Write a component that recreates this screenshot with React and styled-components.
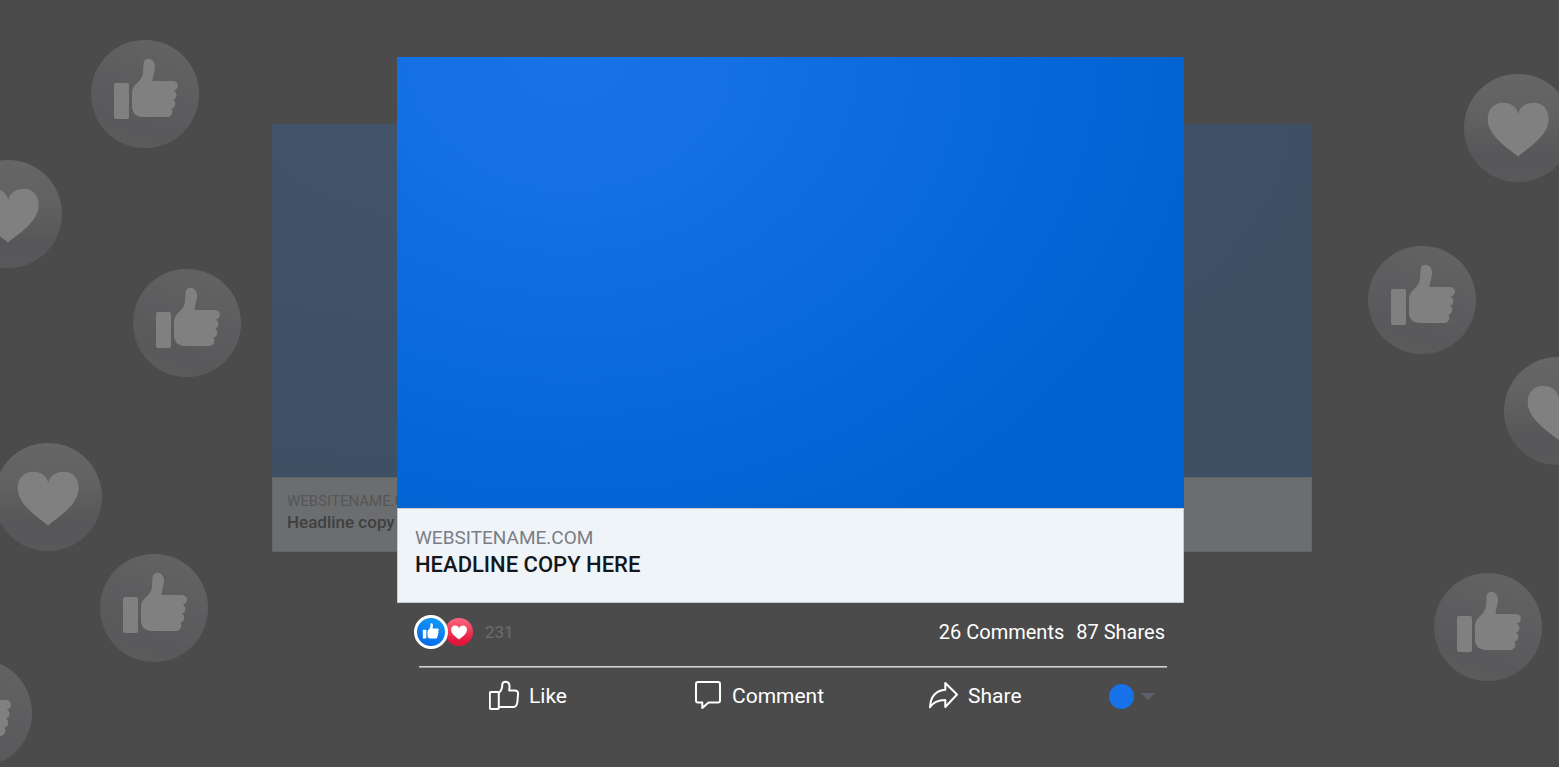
import React from "react";
import styled, { createGlobalStyle } from "styled-components";

const GlobalStyle = createGlobalStyle`
  *, *::before, *::after { box-sizing: border-box; }
  body { margin: 0; background: #4b4b4b; }
`;

const Page = styled.main`
  position: relative;
  min-height: 100vh;
  overflow: hidden;
  padding: 57px 0 48px;
  display: grid;
  grid-template-columns: 272fr 125fr 787fr 128fr 247fr;
  align-items: start;
  align-content: start;
  background: #4b4b4b;
  color: #fff;
  font-family: Roboto, "Liberation Sans", sans-serif;
`;

const Bubble = styled.div`
  position: absolute;
  top: ${(p) => p.$top}px;
  ${(p) => p.$side}: ${(p) => p.$offset}px;
  width: 108px;
  height: 108px;
  border-radius: 50%;
  color: #808080;
  background: ${(p) =>
    p.$kind === "heart"
      ? "linear-gradient(180deg, #666666 0%, #626263 35%, #575759 75%, #59595b 100%)"
      : "linear-gradient(200deg, #646465 0%, #5d5d5f 45%, #59595b 75%, #5d5d5e 100%)"};
`;

const Glyph = styled.svg`
  display: block;
  width: 100%;
  height: 100%;
  fill: currentColor;
`;

const BackCard = styled.section`
  grid-area: 1 / 2 / 2 / 5;
  position: relative;
  margin-top: 67px;
`;

const BackMedia = styled.div`
  aspect-ratio: 1040 / 353;
  background: radial-gradient(ellipse 95% 120% at 22% 0%, #43546b 0%, #3e5065 75%, #3d4f61 100%);
`;

const BackCaption = styled.div`
  height: 75px;
  padding: 12px 14px;
  border: 1px solid #646566;
  background: #6c6d6f;
`;

const BackSite = styled.p`
  margin: 0;
  font-size: 15px;
  line-height: 22px;
  color: #555657;
`;

const BackTitle = styled.h2`
  margin: 0;
  font-size: 17px;
  font-weight: 500;
  line-height: 21px;
  color: #3f3f40;
`;

const Post = styled.article`
  grid-area: 1 / 3 / 2 / 4;
  position: relative;
`;

const Media = styled.div`
  aspect-ratio: 787 / 451;
  background: radial-gradient(ellipse 82% 118% at 22% 0%, #1872e8 0%, #1470e4 25%, #0666d9 75%, #0062cf 100%);
`;

const Caption = styled.div`
  height: 95px;
  padding: 15px 17px;
  border: 1px solid #c6cacd;
  background: #eff4f8;
`;

const Site = styled.p`
  margin: 0;
  font-size: 19px;
  line-height: 27px;
  color: #7b7d84;
`;

const Title = styled.h1`
  margin: 0;
  font-size: 22px;
  font-weight: 500;
  line-height: 27px;
  color: #14171c;
`;

const Stats = styled.div`
  display: flex;
  align-items: center;
  height: 58px;
  padding: 0 19px 0 17px;
  font-size: 20px;
  line-height: 28px;
`;

const Reaction = styled.span`
  position: relative;
  z-index: ${(p) => (p.$ring ? 1 : 0)};
  width: ${(p) => (p.$ring ? 34 : 28)}px;
  height: ${(p) => (p.$ring ? 34 : 28)}px;
  margin-left: ${(p) => (p.$ring ? 0 : -3)}px;
  border: ${(p) => (p.$ring ? "3px solid #fff" : "none")};
  border-radius: 50%;
  background: ${(p) =>
    p.$ring ? "linear-gradient(200deg, #16a5fa, #0468e8 85%)" : "linear-gradient(#ff6680, #e0163a 85%)"};
  background-origin: border-box;
`;

const Count = styled.span`
  margin-left: 12px;
  font-size: 17px;
  color: #6b6d73;
`;

const Totals = styled.div`
  display: flex;
  gap: 12px;
  margin-left: auto;
`;

const Divider = styled.hr`
  height: 2px;
  margin: 5px 17px 0 22px;
  border: 0;
  border-top: 1px solid #d2d2d2;
  background: #9b9b9b;
`;

const Actions = styled.div`
  display: grid;
  grid-template-columns: 70fr 205fr 234fr 181fr 58fr;
  align-items: center;
  margin: 0 17px 0 22px;
  height: 56px;
`;

const Action = styled.button`
  display: flex;
  align-items: center;
  gap: 10px;
  padding: 0;
  border: 0;
  background: none;
  color: #fff;
  font: 21px/28px Roboto, "Liberation Sans", sans-serif;
  white-space: nowrap;
  cursor: pointer;

  &:first-child { grid-column: 2; }
`;

const LineIcon = styled.svg`
  flex: none;
  width: ${(p) => p.$width}px;
  height: 32px;
  fill: none;
  stroke: currentColor;
  stroke-width: 2;
  stroke-linejoin: round;
  stroke-linecap: round;
`;

const Account = styled(Action)`
  gap: 7px;
`;

const Avatar = styled.span`
  width: 25px;
  height: 25px;
  border-radius: 50%;
  background: #1771e8;
`;

const Caret = styled.svg`
  width: 14px;
  height: 8px;
  fill: #5c626b;
`;

const ThumbGlyph = () => (
  <Glyph viewBox="0 0 108 108" aria-hidden="true">
    <rect x="23" y="43" width="15" height="36" rx="2" />
    <path d="M41 53C41 44 51 42 52 33L52.500 24C52.700 20.500 54.500 18.700 57.500 18.700C62 19 64.500 23 64 28C63.500 33 61.500 37 61.500 41H82C88.500 41 88.500 50 82.500 50.500C86.500 52 86.500 58.500 82 59.500C85.500 61.500 85 67.500 80.500 68.500C82.500 71.500 81 77 76.500 77H52C45 77 41 73 41 66Z" />
  </Glyph>
);

const HeartGlyph = () => (
  <Glyph viewBox="0 0 108 108" aria-hidden="true">
    <path d="M54 82.500C44 74 23.700 62 23.700 45C23.700 35 30 28.700 39 28.700C47 28.700 53 33 54.200 40C55.500 33 62 28.700 70 28.700C78.500 28.700 84.700 35 84.700 45C84.700 62 64 74 54 82.500Z" />
  </Glyph>
);

const SmallThumb = () => (
  <Glyph viewBox="18 9 72 72" aria-hidden="true">
    <rect x="33" y="39" width="9" height="23" rx="1.500" />
    <path d="M45 45C45 39 51 38 52 32L52.500 26C53 23 54 22 56 22.500C59 23.500 60 28 58.500 33L58 36H71C75 36 75 42 72 43C74 45 74 48.500 71.500 49.500C73 52 72 54.500 70 55.500C71 58 70 62 67 62H52C47.500 62 45 58.500 45 54Z" />
  </Glyph>
);

const bubbles = [
  { kind: "thumb", side: "left", offset: 91, top: 40 },
  { kind: "heart", side: "left", offset: -46, top: 160 },
  { kind: "thumb", side: "left", offset: 133, top: 269 },
  { kind: "heart", side: "left", offset: -6, top: 443 },
  { kind: "thumb", side: "left", offset: 100, top: 554 },
  { kind: "thumb", side: "left", offset: -76, top: 659 },
  { kind: "heart", side: "right", offset: -13, top: 74 },
  { kind: "thumb", side: "right", offset: 83, top: 246 },
  { kind: "heart", side: "right", offset: -53, top: 357 },
  { kind: "thumb", side: "right", offset: 17, top: 573 },
];

export default function App() {
  return (
    <>
      <GlobalStyle />
      <Page>
        {bubbles.map((b) => (
          <Bubble key={`${b.side}${b.top}`} $kind={b.kind} $side={b.side} $offset={b.offset} $top={b.top}>
            {b.kind === "heart" ? <HeartGlyph /> : <ThumbGlyph />}
          </Bubble>
        ))}
        <BackCard>
          <BackMedia />
          <BackCaption>
            <BackSite>WEBSITENAME.COM</BackSite>
            <BackTitle>Headline copy</BackTitle>
          </BackCaption>
        </BackCard>
        <Post>
          <Media />
          <Caption>
            <Site>WEBSITENAME.COM</Site>
            <Title>HEADLINE COPY HERE</Title>
          </Caption>
          <Stats>
            <Reaction $ring><SmallThumb /></Reaction>
            <Reaction><HeartGlyph /></Reaction>
            <Count>231</Count>
            <Totals>
              <span>26 Comments</span>
              <span>87 Shares</span>
            </Totals>
          </Stats>
          <Divider />
          <Actions>
            <Action type="button">
              <LineIcon $width={30} viewBox="1 0 30 32" aria-hidden="true">
                <rect x="1.800" y="12" width="9" height="17" rx="1.500" />
                <path d="M10.800 12.500C14 11 14.200 8 14.300 4.500C14.500 2.500 16 1.800 17.500 1.800C20 1.800 21.500 3.500 21.500 6.500C21.500 8 21.300 9 21.200 10.500H26.500C29.500 10.500 30.300 12 30 14.500L29.500 21C29.200 25 28.500 27 25.500 27H10.800" />
              </LineIcon>
              Like
            </Action>
            <Action type="button">
              <LineIcon $width={28} viewBox="0 0 28 32" aria-hidden="true">
                <path d="M4 2H24Q26 2 26 4V20.500Q26 22.500 24 22.500H14.500L8.300 28V22.500H4Q2 22.500 2 20.500V4Q2 2 4 2Z" />
              </LineIcon>
              Comment
            </Action>
            <Action type="button">
              <LineIcon $width={30} viewBox="0 0 30 32" aria-hidden="true">
                <path d="M17.300 3L29 14.500L17.300 27V20C11 20 5.500 21.500 2 27.300C2.500 18 7 10.500 17.300 9.700Z" />
              </LineIcon>
              Share
            </Action>
            <Account type="button" aria-label="Choose account">
              <Avatar />
              <Caret viewBox="0 0 14 8" aria-hidden="true">
                <path d="M0 1H14L7 8Z" />
              </Caret>
            </Account>
          </Actions>
        </Post>
      </Page>
    </>
  );
}
